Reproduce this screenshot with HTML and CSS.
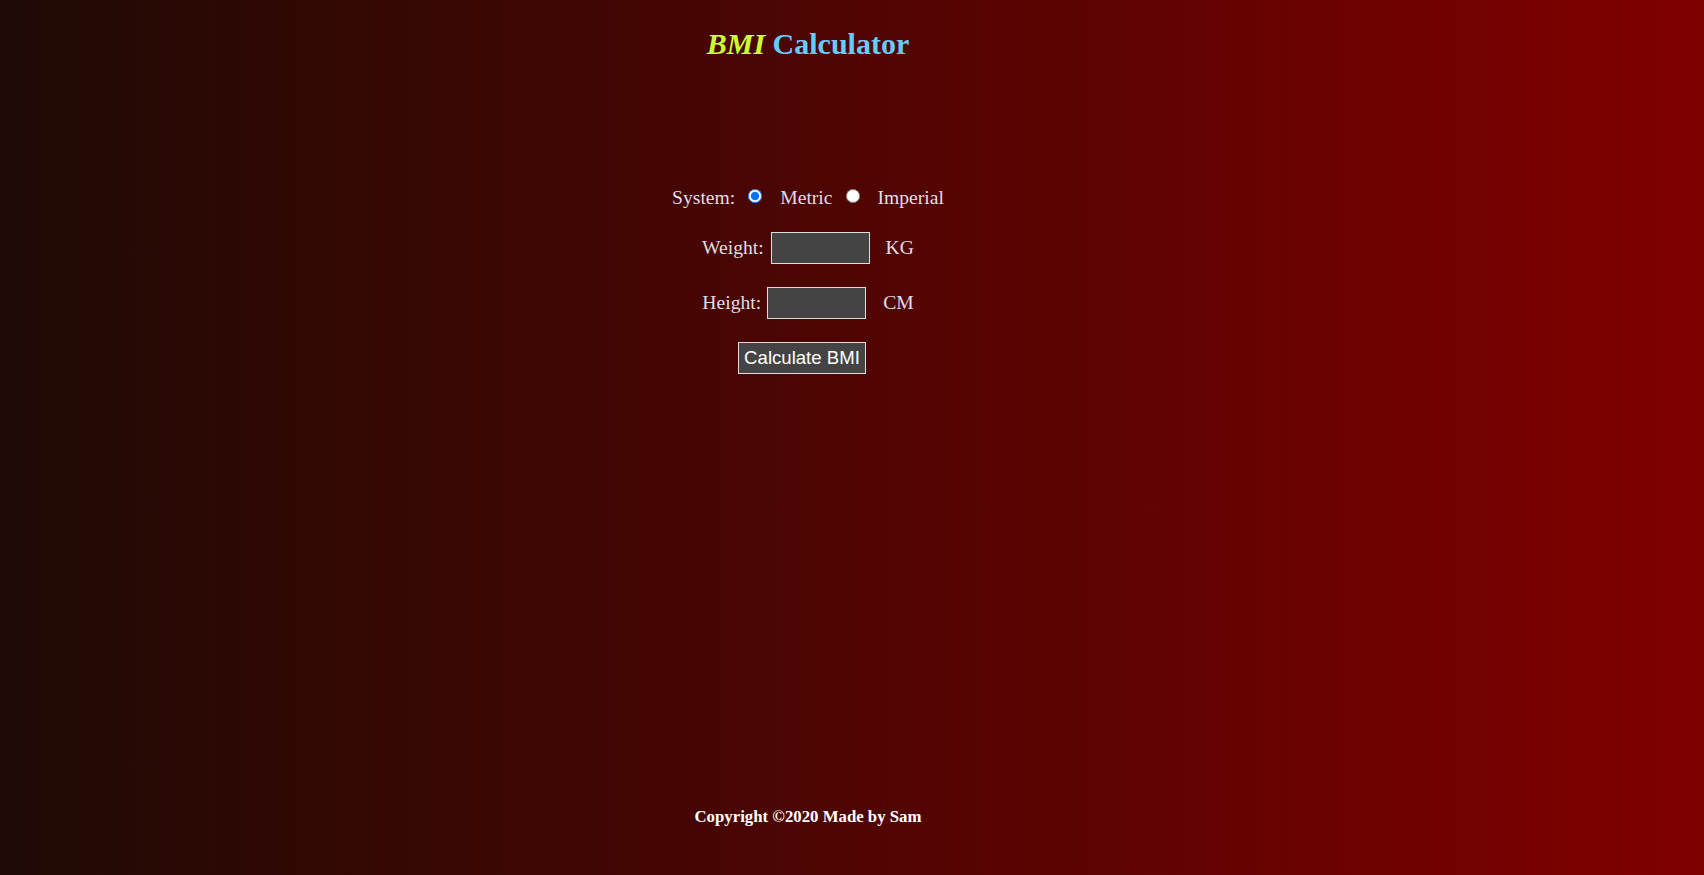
FILE: index.html
```html
<!DOCTYPE html>
<html lang="en">
<head>
<meta charset="utf-8">
<title>BMI Calculator</title>
<link rel="stylesheet" href="styles.css">
</head>
<body>
<div class="page">
  <h1 class="title"><em class="title-bmi">BMI</em> <span class="title-calc">Calculator</span></h1>
  <form class="calc">
    <div class="row row-system">
      <span class="label">System:</span>
      <input class="radio radio-first" type="radio" name="system" checked>
      <span class="label opt">Metric</span>
      <input class="radio radio-second" type="radio" name="system">
      <span class="label opt">Imperial</span>
    </div>
    <div class="row">
      <span class="label">Weight:</span>
      <input class="field" type="text">
      <span class="label unit">KG</span>
    </div>
    <div class="row">
      <span class="label">Height:</span>
      <input class="field field-h" type="text">
      <span class="label unit unit-h">CM</span>
    </div>
    <div class="row">
      <button class="btn" type="button">Calculate BMI</button>
    </div>
  </form>
  <footer class="footer">Copyright ©2020 Made by Sam</footer>
</div>
</body>
</html>
```
FILE: styles.css
```css
html, body {
  margin: 0;
  padding: 0;
  height: 100%;
  overflow: hidden;
}
body {
  background: linear-gradient(to right, #1f0a05 0%, #800000 100%);
  font-family: "Liberation Serif", "Times New Roman", serif;
  color: #ddd;
}
.page {
  width: 1616px;
  height: 100vh;
  box-sizing: border-box;
  display: flex;
  flex-direction: column;
  align-items: center;
  padding-bottom: 48px;
}
.title {
  margin: 27px 0 0;
  font-size: 30px;
  font-weight: bold;
  line-height: normal;
}
.title-bmi {
  color: #ccff33;
  font-style: italic;
}
.title-calc {
  color: #66ccff;
}
.calc {
  margin-top: 126px;
  display: flex;
  flex-direction: column;
  align-items: center;
  gap: 23px;
}
.row {
  display: flex;
  align-items: center;
  justify-content: center;
  min-height: 32px;
}
.row-system {
  min-height: 22px;
}
.label {
  font-size: 19.6px;
  line-height: normal;
  color: #e2dde6;
}
.radio {
  width: 14px;
  height: 14px;
  margin: 0 0 5px 0;
}
.radio-first {
  margin-left: 13px;
}
.radio-second {
  margin-left: 13px;
}
.opt {
  margin-left: 18px;
}
.field {
  box-sizing: border-box;
  width: 99px;
  height: 32px;
  margin: 0 0 0 7px;
  padding: 0 4px;
  background: #444;
  border: 1px solid #ddd;
  color: #fff;
  font-size: 16px;
}
.field-h {
  margin-left: 6px;
}
.unit {
  margin-left: 16px;
}
.unit-h {
  margin-left: 17px;
}
.btn {
  box-sizing: border-box;
  height: 32px;
  width: 128px;
  padding: 0 4px;
  margin-right: 12px;
  background: #444;
  color: #fff;
  border: 1px solid #ddd;
  font-family: "Liberation Sans", Arial, sans-serif;
  font-size: 18.6px;
}
.footer {
  margin-top: auto;
  font-size: 16.8px;
  font-weight: bold;
  color: #fff;
  line-height: normal;
}
```
